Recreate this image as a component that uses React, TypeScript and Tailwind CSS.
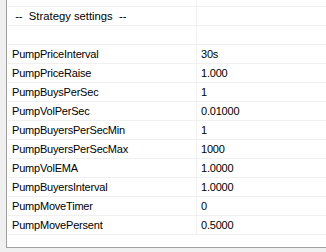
const rows: [string, string][] = [
  ["PumpPriceInterval", "30s"],
  ["PumpPriceRaise", "1.000"],
  ["PumpBuysPerSec", "1"],
  ["PumpVolPerSec", "0.01000"],
  ["PumpBuyersPerSecMin", "1"],
  ["PumpBuyersPerSecMax", "1000"],
  ["PumpVolEMA", "1.0000"],
  ["PumpBuyersInterval", "1.0000"],
  ["PumpMoveTimer", "0"],
  ["PumpMovePersent", "0.5000"],
];

function Row({ name, value, h = "h-[19px]", head = false }: { name: string; value: string; h?: string; head?: boolean }) {
  return (
    <div className={`flex ml-px border-b border-[#f0f0f0] ${h}`}>
      <div
        className={`w-[189px] shrink-0 border-r border-[#f0f0f0] pl-[4px] flex items-center whitespace-pre ${
          head ? "text-[11.25px] tracking-normal pt-px" : ""
        }`}
      >
        {name}
      </div>
      <div className="flex-1 pl-[4px] flex items-center whitespace-pre">{value}</div>
    </div>
  );
}

export default function App() {
  return (
    <div
      className="w-[326px] h-[252px] bg-[#f0f0f0] pl-[6px] overflow-hidden text-[11px] tracking-[-0.2px] text-black"
      style={{ fontFamily: '"Liberation Sans", Arial, sans-serif' }}
    >
      <div className="h-[248px] bg-white border-l border-b border-[#a0a0a0] flex flex-col">
        <Row name="" value="" h="h-[7px]" />
        <Row name=" --  Strategy settings  --" value="" head />
        <Row name="" value="" />
        {rows.map(([n, v]) => (
          <Row key={n} name={n} value={v} />
        ))}
      </div>
    </div>
  );
}
